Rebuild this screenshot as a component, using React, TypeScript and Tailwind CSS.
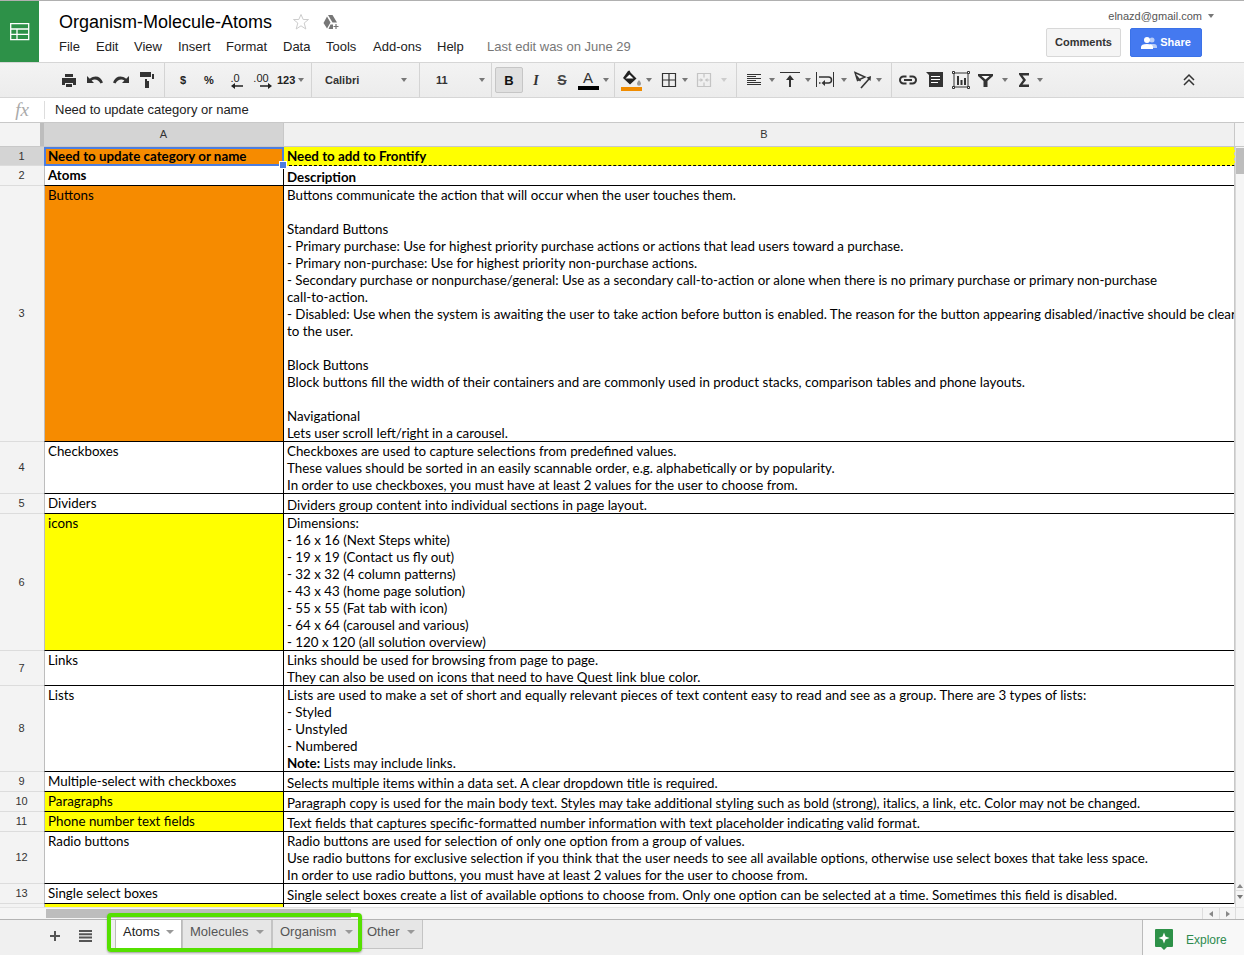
import React from 'react';

const arial = "font-['Liberation_Sans',Arial,sans-serif]";
const cellFont = "font-['Lato','Noto_Sans',sans-serif]";

const Caret = ({ light, big }: { light?: boolean; big?: boolean }) => (
  <span className={`inline-block h-0 w-0 border-t-[4px] border-x-transparent ${big ? 'border-x-[4px]' : 'border-x-[3px]'} ${light ? 'border-t-[#ccc]' : big ? 'border-t-[#999]' : 'border-t-[#777]'}`} />
);

const Ico = ({ children, w = 18 }: { children: React.ReactNode; w?: number }) => (
  <svg width={w} height="18" viewBox={`0 0 ${w} 18`} fill="none" className="block shrink-0">
    {children}
  </svg>
);

const Print = () => (
  <Ico>
    <path fill="#333" d="M5 3h8v3H5zM2 7h14v7h-3v-2H5v2H2zM6 13h6v3H6z" />
  </Ico>
);
const Undo = () => (
  <Ico>
    <path fill="#333" d="M1 5v7h7L5.600 9.600C8 7.800 12.500 8.200 14.500 12.500L17 11.500C14.800 4.800 8.500 3.800 3.800 7.800z" />
  </Ico>
);
const Redo = () => (
  <Ico>
    <path fill="#333" d="M17 5v7h-7l2.400-2.400C10 7.800 5.500 8.200 3.500 12.500L1 11.500C3.200 4.800 9.500 3.800 14.200 7.800z" />
  </Ico>
);
const Paint = () => (
  <Ico>
    <path fill="#333" d="M2 1h11v5H2zM14 3h2v5H9v2h2v7H7v-9h7z" />
  </Ico>
);
const Fill = () => (
  <Ico w={22}>
    <path fill="#222" d="M7 1l1.500-.5 1 2 6 6-6.500 6L2 8z" />
    <path fill="#fff" d="M8.500 4.500l4 4H4.500z" />
    <path fill="#999" d="M18 10c1.500 2 2 2.800 2 3.800a2 2 0 0 1-4 0c0-1 .5-1.800 2-3.800z" />
  </Ico>
);
const Borders = () => (
  <Ico>
    <path stroke="#333" strokeWidth="1.200" d="M2.500 2.500h13v13h-13zM9 2.500v13M2.500 9h13" />
  </Ico>
);
const Merge = () => (
  <Ico>
    <path stroke="#c4c4c4" strokeWidth="1.200" d="M2.500 2.500h13v13h-13zM9 2.500v4M9 11.500v4" />
    <path stroke="#c4c4c4" strokeWidth="1.200" d="M3.500 9h4M14.500 9h-4" />
    <path fill="#c4c4c4" d="M8 9L5.500 7v4zM10 9l2.500-2v4z" />
  </Ico>
);
const AlignLeft = () => (
  <Ico>
    <path stroke="#333" d="M2 3.500h14M2 5.500h9M2 7.500h14M2 9.500h9M2 11.500h14M2 13.500h14" />
  </Ico>
);
const VAlign = () => (
  <Ico w={22}>
    <path stroke="#333" d="M1 1.500h20" />
    <path fill="#333" d="M11 4l4 5h-3v7h-2V9H7z" />
  </Ico>
);
const Wrap = () => (
  <Ico w={20}>
    <path stroke="#333" d="M1.500 1v15M18.500 1v15" />
    <path stroke="#333" strokeWidth="1.500" d="M4 6h9.500a2.500 2.500 0 0 1 0 6H8" />
    <path fill="#333" d="M10 9v6l-3.500-3z" />
    <path stroke="#333" strokeWidth="1.500" d="M4 12h1.500" />
  </Ico>
);
const Rotate = () => (
  <Ico w={20}>
    <path stroke="#333" strokeWidth="1.400" d="M2 1.500l10 4.500-7.500 3.500zM3.500 5l4 5" />
    <path stroke="#333" strokeWidth="1.600" d="M8 17l8-9" />
    <path fill="#333" d="M18 5l-.5 5-4-3.500z" />
  </Ico>
);
const LinkIco = () => (
  <Ico>
    <path stroke="#333" strokeWidth="2" d="M7.500 5.500H4.500a3.500 3.500 0 0 0 0 7h3M10.500 5.500h3a3.500 3.500 0 0 1 0 7h-3M5 9h8" />
  </Ico>
);
const CommentIco = () => (
  <Ico>
    <path fill="#333" d="M0 1h17v15H3V4z" />
    <path stroke="#fff" d="M5 5.500h9M5 8.500h9M5 11.500h7" />
  </Ico>
);
const ChartIco = () => (
  <Ico>
    <path stroke="#333" d="M2 2h14v14H2z" />
    <path fill="#fff" stroke="#333" d="M.5.5h2v2h-2zM15.500.5h2v2h-2zM.5 15.500h2v2h-2zM15.500 15.500h2v2h-2z" />
    <path fill="#333" d="M5 5h2v9H5zM8.500 9h2v5h-2zM12 7h2v7h-2z" />
  </Ico>
);
const FilterIco = () => (
  <Ico w={16}>
    <path fill="#333" d="M0 3h15v2l-5.500 5v6h-4v-6L0 5z" />
    <path fill="#fff" d="M3.500 5h8L7.500 8.500z" />
  </Ico>
);
const Sigma = () => (
  <Ico w={14}>
    <path fill="#333" d="M2 2h10v2.500H5.500L9 9l-3.500 4.500H12V16H2v-1.500L6 9 2 3.500z" />
  </Ico>
);
const Collapse = () => (
  <Ico>
    <path stroke="#333" strokeWidth="1.500" d="M4 9l5-5 5 5M4 14l5-5 5 5" />
  </Ico>
);
const Arrowed = ({ label, right }: { label: string; right?: boolean }) => (
  <span className={`relative block h-[18px] w-[26px] text-center text-[11px] leading-[14px] text-[#222] ${arial}`}>
    {label}
    <svg width="12" height="6" viewBox="0 0 12 6" className={`absolute bottom-0 ${right ? 'left-[12px]' : 'left-[9px]'}`}>
      {right ? <path fill="#222" d="M0 2.200h8V0l4 3-4 3V3.800H0z" /> : <path fill="#222" d="M12 2.200H4V0L0 3l4 3V3.800h8z" />}
    </svg>
  </span>
);

const Slot = ({ w, children, className = '' }: { w: number; children?: React.ReactNode; className?: string }) => (
  <div style={{ width: w }} className={`flex h-full shrink-0 items-center justify-center ${className}`}>
    {children}
  </div>
);

const Group = ({ w, children, pl = 0, last }: { w?: number; children: React.ReactNode; pl?: number; last?: boolean }) => (
  <div style={{ width: w, paddingLeft: pl }} className={`flex h-full shrink-0 items-center ${last ? 'grow' : 'border-r border-[#d4d4d4]'}`}>
    {children}
  </div>
);

const Toolbar = () => (
  <div className={`flex h-[36px] border-y border-[#d6d6d6] bg-gradient-to-b from-[#f3f3f3] to-[#ececec] ${arial}`}>
    <Group w={165} pl={56}>
      <Slot w={26}><Print /></Slot>
      <Slot w={26}><Undo /></Slot>
      <Slot w={26}><Redo /></Slot>
      <Slot w={26}><Paint /></Slot>
    </Group>
    <Group w={147} pl={5}>
      <Slot w={26}><span className="text-[11px] font-bold text-[#222]">$</span></Slot>
      <Slot w={26}><span className="text-[11px] font-bold text-[#222]">%</span></Slot>
      <Slot w={26}><Arrowed label=".0" /></Slot>
      <Slot w={26}><Arrowed label=".00" right /></Slot>
      <span className="ml-[3px] text-[11px] font-bold text-[#222]">123</span>
      <span className="ml-[3px] flex"><Caret /></span>
    </Group>
    <Group w={108} pl={13}>
      <span className="w-[76px] text-[11px] font-bold text-[#333]">Calibri</span>
      <Caret />
    </Group>
    <Group w={72} pl={16}>
      <span className="w-[43px] text-[11px] font-bold text-[#333]">11</span>
      <Caret />
    </Group>
    <Group w={123} pl={3}>
      <div className="flex h-[26px] w-[28px] items-center justify-center rounded-[2px] border border-[#c6c6c6] bg-[#e0e0e0]">
        <span className="text-[13px] font-bold leading-none text-[#111]">B</span>
      </div>
      <Slot w={26}><span className="font-['Liberation_Serif',serif] text-[14px] font-bold italic text-[#333]">I</span></Slot>
      <Slot w={26}><span className="text-[14px] font-bold text-[#444] line-through">S</span></Slot>
      <Slot w={26}>
        <div className="flex flex-col items-center">
          <span className="text-[15px] leading-[13px] text-[#333]">A</span>
          <span className="mt-[2px] h-[4px] w-[21px] bg-black" />
        </div>
      </Slot>
      <span className="ml-[2px] flex"><Caret /></span>
    </Group>
    <Group w={122} pl={6}>
      <div className="flex w-[21px] flex-col items-center">
        <Fill />
        <span className="-mt-[1px] h-[4px] w-[21px] bg-[#f08c00]" />
      </div>
      <span className="ml-[4px] flex w-[14px]"><Caret /></span>
      <Borders />
      <span className="ml-[4px] flex w-[13px]"><Caret /></span>
      <Merge />
      <span className="ml-[8px] flex"><Caret light /></span>
    </Group>
    <Group w={155} pl={8}>
      <AlignLeft />
      <span className="ml-[6px] flex w-[6px]"><Caret /></span>
      <span className="ml-[4px] flex"><VAlign /></span>
      <span className="ml-[4px] flex w-[6px]"><Caret /></span>
      <span className="ml-[4px] flex"><Wrap /></span>
      <span className="ml-[6px] flex w-[6px]"><Caret /></span>
      <span className="ml-[6px] flex"><Rotate /></span>
      <span className="ml-[3px] flex"><Caret /></span>
    </Group>
    <Group last pl={7}>
      <LinkIco />
      <span className="ml-[9px]"><CommentIco /></span>
      <span className="ml-[8px]"><ChartIco /></span>
      <span className="ml-[8px]"><FilterIco /></span>
      <span className="ml-[8px] flex"><Caret /></span>
      <span className="ml-[9px]"><Sigma /></span>
      <span className="ml-[6px] flex"><Caret /></span>
      <span className="ml-[137px]"><Collapse /></span>
    </Group>
  </div>
);

const Header = () => (
  <div className={`flex h-[61px] ${arial}`}>
    <div className="flex w-[39px] shrink-0 items-center justify-center bg-[#2d9148]">
      <svg width="20" height="18" viewBox="0 0 20 18" fill="none">
        <path stroke="#fff" strokeWidth="1.300" d="M.7.700h18v16H.7zM.7 6h18M.7 11.300h18M7 6v10.700" />
      </svg>
    </div>
    <div className="min-w-0 grow pl-[20px]">
      <div className="flex h-[24px] items-center pt-[17px]">
        <span className="text-[18px] leading-[24px] text-black">Organism-Molecule-Atoms</span>
        <svg width="18" height="18" viewBox="0 0 18 18" fill="none" className="ml-[20px]">
          <path stroke="#ccc" d="M9 1.500l2.200 5H16.500l-4.300 3.500 1.600 6L9 12.800 4.200 16l1.600-6L1.500 6.500h5.300z" />
        </svg>
        <svg width="18" height="16" viewBox="0 0 18 16" className="ml-[12px]">
          <path fill="#777" d="M6 1h4.500l4.500 7.500h-4.500zM5 2.500l3.500 6L5 14.500 1.500 9zM6.500 15l2-4.500H11V15z" />
          <path stroke="#777" strokeWidth="1.200" d="M14 10v5M11.500 12.500h5" />
        </svg>
      </div>
      <div className="mt-[14px] flex items-center text-[13px] leading-[16px] text-[#222]">
        <span className="w-[37px]">File</span>
        <span className="w-[38px]">Edit</span>
        <span className="w-[44px]">View</span>
        <span className="w-[48px]">Insert</span>
        <span className="w-[57px]">Format</span>
        <span className="w-[43px]">Data</span>
        <span className="w-[47px]">Tools</span>
        <span className="w-[64px]">Add-ons</span>
        <span className="w-[49px]">Help</span>
        <span className="ml-[1px] text-[#777]">Last edit was on June 29</span>
      </div>
    </div>
    <div className="flex w-[198px] shrink-0 flex-col items-end pr-[42px]">
      <div className="-mr-[12px] mt-[7px] flex h-[16px] items-center text-[11px] text-[#555]">
        elnazd@gmail.com
        <span className="ml-[6px] flex"><Caret /></span>
      </div>
      <div className="mt-[4px] flex gap-[9px]">
        <div className="flex h-[29px] w-[75px] items-center justify-center rounded-[2px] border border-[#d8d8d8] bg-[#f5f5f5] text-[11px] font-bold text-[#333]">
          Comments
        </div>
        <div className="flex h-[29px] w-[72px] items-center justify-center gap-[3px] rounded-[2px] border border-[#3b72e8] bg-[#4479f0] text-[11px] font-bold text-white">
          <svg width="16" height="14" viewBox="0 0 16 14">
            <circle cx="11" cy="4" r="2.500" fill="#b9cdf8" />
            <path fill="#b9cdf8" d="M9 8h4c2 0 3 1 3 3v1H9z" />
            <circle cx="6" cy="4" r="3" fill="#fff" />
            <path fill="#fff" d="M0 13v-2c0-2 2-3 6-3s6 1 6 3v2z" />
          </svg>
          Share
        </div>
      </div>
    </div>
  </div>
);

const FormulaBar = () => (
  <div className={`flex h-[25px] items-center border-b border-[#c8c8c8] pb-[1px] ${arial}`}>
    <span className="w-[44px] text-center font-['Liberation_Serif',serif] text-[19px] italic leading-[22px] text-[#aaa]">fx</span>
    <span className="h-[18px] w-px bg-[#ddd]" />
    <span className="ml-[10px] text-[13px] text-[#222]">Need to update category or name</span>
  </div>
);

const ColHeaders = () => (
  <div className={`flex h-[24px] border-b border-[#c8c8c8] text-[11px] ${arial}`}>
    <div className="w-[40px] shrink-0 bg-[#f3f3f3]" />
    <div className="w-[4px] shrink-0 bg-[#bdbdbd]" />
    <div className="flex w-[240px] shrink-0 items-center justify-center border-r border-[#c8c8c8] bg-[#d4d4d4] text-[#333]">A</div>
    <div className="flex w-[951px] shrink-0 items-center justify-center border-r border-[#c8c8c8] bg-[#f0f0f0] pl-[10px] text-[#333]">B</div>
    <div className="grow bg-[#f5f5f5]" />
  </div>
);

type Line = string | React.ReactNode;
type RowData = {
  n: number;
  h: number;
  a: string;
  b: Line[];
  aBg?: string;
  bBg?: string;
  bold?: boolean;
  selected?: boolean;
};

const rows: RowData[] = [
  { n: 1, h: 19, a: 'Need to update category or name', aBg: 'bg-[#f68b00]', bBg: 'bg-[#ffff00]', bold: true, selected: true, b: ['Need to add to Frontify'] },
  { n: 2, h: 20, a: 'Atoms', bold: true, b: ['Description'] },
  {
    n: 3, h: 256, a: 'Buttons', aBg: 'bg-[#f68b00]',
    b: [
      'Buttons communicate the action that will occur when the user touches them.',
      '',
      'Standard Buttons',
      '- Primary purchase: Use for highest priority purchase actions or actions that lead users toward a purchase.',
      '- Primary non-purchase: Use for highest priority non-purchase actions.',
      '- Secondary purchase or nonpurchase/general: Use as a secondary call-to-action or alone when there is no primary purchase or primary non-purchase',
      'call-to-action.',
      '- Disabled: Use when the system is awaiting the user to take action before button is enabled. The reason for the button appearing disabled/inactive should be clear',
      'to the user.',
      '',
      'Block Buttons',
      'Block buttons fill the width of their containers and are commonly used in product stacks, comparison tables and phone layouts.',
      '',
      'Navigational',
      'Lets user scroll left/right in a carousel.',
    ],
  },
  {
    n: 4, h: 52, a: 'Checkboxes',
    b: [
      'Checkboxes are used to capture selections from predefined values.',
      'These values should be sorted in an easily scannable order, e.g. alphabetically or by popularity.',
      'In order to use checkboxes, you must have at least 2 values for the user to choose from.',
    ],
  },
  { n: 5, h: 20, a: 'Dividers', b: ['Dividers group content into individual sections in page layout.'] },
  {
    n: 6, h: 137, a: 'icons', aBg: 'bg-[#ffff00]',
    b: [
      'Dimensions:',
      '- 16 x 16 (Next Steps white)',
      '- 19 x 19 (Contact us fly out)',
      '- 32 x 32 (4 column patterns)',
      '- 43 x 43 (home page solution)',
      '- 55 x 55 (Fat tab with icon)',
      '- 64 x 64 (carousel and various)',
      '- 120 x 120 (all solution overview)',
    ],
  },
  {
    n: 7, h: 35, a: 'Links',
    b: ['Links should be used for browsing from page to page.', 'They can also be used on icons that need to have Quest link blue color.'],
  },
  {
    n: 8, h: 86, a: 'Lists',
    b: [
      'Lists are used to make a set of short and equally relevant pieces of text content easy to read and see as a group. There are 3 types of lists:',
      '- Styled',
      '- Unstyled',
      '- Numbered',
      <span key="note"><b>Note:</b> Lists may include links.</span>,
    ],
  },
  { n: 9, h: 20, a: 'Multiple-select with checkboxes', b: ['Selects multiple items within a data set. A clear dropdown title is required.'] },
  { n: 10, h: 20, a: 'Paragraphs', aBg: 'bg-[#ffff00]', b: ['Paragraph copy is used for the main body text. Styles may take additional styling such as bold (strong), italics, a link, etc. Color may not be changed.'] },
  { n: 11, h: 20, a: 'Phone number text fields', aBg: 'bg-[#ffff00]', b: ['Text fields that captures specific-formatted number information with text placeholder indicating valid format.'] },
  {
    n: 12, h: 52, a: 'Radio buttons',
    b: [
      'Radio buttons are used for selection of only one option from a group of values.',
      'Use radio buttons for exclusive selection if you think that the user needs to see all available options, otherwise use select boxes that take less space.',
      'In order to use radio buttons, you must have at least 2 values for the user to choose from.',
    ],
  },
  { n: 13, h: 20, a: 'Single select boxes', b: ['Single select boxes create a list of available options to choose from. Only one option can be selected at a time. Sometimes this field is disabled.'] },
];

const Row = ({ r }: { r: RowData }) => (
  <div style={{ height: r.h }} className="relative flex shrink-0">
    <div className={`flex w-[44px] shrink-0 items-center justify-center border-b border-[#dcdcdc] pr-[1px] text-[11px] text-[#333] ${arial} ${r.selected ? 'bg-[#d4d4d4]' : 'bg-[#f3f3f3]'}`}>
      {r.n}
    </div>
    <div
      className={`w-[240px] shrink-0 overflow-hidden whitespace-nowrap ${r.selected ? 'border-2 border-[#4d7ee0] pl-[2px] leading-[14px]' : 'border-b border-l border-r border-b-black border-l-[#bdbdbd] border-r-black pl-[3px] pt-[1px] leading-[17px]'} ${r.aBg ?? 'bg-white'} ${r.bold ? 'font-bold' : ''}`}
    >
      {r.a}
    </div>
    <div
      className={`flex w-[951px] shrink-0 flex-col justify-end overflow-hidden whitespace-nowrap pl-[3px] leading-[17px] ${r.selected ? 'border-b border-dashed border-b-black' : 'shadow-[inset_0_-1px_0_#000]'} border-r border-r-[#c8c8c8] ${r.bBg ?? 'bg-white'} ${r.bold ? 'font-bold' : ''}`}
    >
      {r.b.map((l, i) => (
        <div key={i} className="h-[17px] shrink-0">{l}</div>
      ))}
    </div>
    {r.selected && (
      <div className="absolute left-[280px] top-[15px] z-10 h-[6px] w-[6px] bg-[#4d7ee0] outline outline-1 outline-white" />
    )}
  </div>
);

const VScrollbar = () => (
  <div className="relative w-[9px] shrink-0 border-l border-[#d8d8d8] bg-[#f5f5f5]">
    <div className="absolute left-0 top-[1px] h-[26px] w-[8px] bg-[#bdbdbd]" />
    <div className="absolute bottom-[16px] left-0 flex h-[9px] w-[8px] items-center justify-center border-b border-[#ddd]">
      <span className="h-0 w-0 border-x-[3px] border-b-[4px] border-x-transparent border-b-[#888]" />
    </div>
    <div className="absolute bottom-[6px] left-0 flex h-[9px] w-[8px] items-center justify-center">
      <Caret />
    </div>
  </div>
);

const Grid = () => (
  <div className={`flex h-[760px] overflow-hidden text-[13.35px] text-black ${cellFont}`}>
    <div className="flex w-[1235px] shrink-0 flex-col overflow-hidden">
      {rows.map(r => (
        <Row key={r.n} r={r} />
      ))}
      <div className="flex h-[3px] shrink-0">
        <div className="w-[44px] bg-[#f3f3f3]" />
        <div className="w-[240px] border-l border-r border-[#bdbdbd] border-r-black bg-[#ffff00]" />
        <div className="grow bg-white" />
      </div>
    </div>
    <VScrollbar />
  </div>
);

const HScroll = () => (
  <div className="flex h-[12px] border-t border-[#e4e4e4] bg-[#f5f5f5]">
    <div className="ml-[46px] mt-[1px] h-[9px] w-[305px] bg-[#bdbdbd]" />
    <div className="ml-auto flex h-full">
      <div className="flex w-[17px] items-center justify-center border-l border-[#ddd]">
        <span className="h-0 w-0 border-y-[3px] border-r-[4px] border-y-transparent border-r-[#888]" />
      </div>
      <div className="flex w-[17px] items-center justify-center border-x border-[#ddd]">
        <span className="h-0 w-0 border-y-[3px] border-l-[4px] border-y-transparent border-l-[#888]" />
      </div>
      <div className="w-[8px]" />
    </div>
  </div>
);

const Tab = ({ label, active, w, pl = 7 }: { label: string; active?: boolean; w: number; pl?: number }) => (
  <div
    style={{ width: w, paddingLeft: pl }}
    className={`flex h-[29px] shrink-0 items-center justify-between border border-t-0 pr-[7px] text-[13px] ${
      active ? 'border-[#bbb] bg-white pb-[5px] text-[#222]' : 'border-[#c4c4c4] bg-[#e6e6e6] pb-[4px] text-[#555]'
    }`}
  >
    <span>{label}</span>
    <Caret big />
  </div>
);

const Tabs = () => (
  <div className={`relative flex h-[36px] border-t border-[#b4b4b4] bg-[#f0f0f0] ${arial}`}>
    <div className="flex w-[115px] shrink-0 items-center pb-[3px] pl-[49px]">
      <svg width="12" height="12" viewBox="0 0 12 12">
        <path fill="#555" d="M5 1h2v4h4v2H7v4H5V7H1V5h4z" />
      </svg>
      <svg width="13" height="12" viewBox="0 0 13 12" className="ml-[18px]">
        <path fill="#555" d="M0 0h13v2H0zM0 3.300h13v2H0zM0 6.600h13v2H0zM0 9.900h13v2H0z" />
      </svg>
    </div>
    <div className="flex items-start">
      <Tab label="Atoms" active w={67} />
      <Tab label="Molecules" w={90} />
      <Tab label="Organism" w={89} />
      <Tab label="Other" w={62} pl={5} />
    </div>
    <div className="absolute left-[107px] top-[-7px] h-[39px] w-[255px] rounded-[4px] border-[4px] border-[#55e000] shadow-[0_1px_2px_rgba(0,0,0,0.35)]" />
    <div className="ml-auto flex w-[102px] items-center border-l border-[#bbb] bg-[#f8f8f8] pl-[12px] pt-[3px]">
      <svg width="18" height="21" viewBox="0 0 18 21">
        <path fill="#2d9148" d="M1 0h16a1 1 0 0 1 1 1v16a1 1 0 0 1-1 1h-5l-3 3-3-3H1a1 1 0 0 1-1-1V1a1 1 0 0 1 1-1z" />
        <path fill="#fff" d="M9 3.500l1.500 4 4 1.500-4 1.500-1.500 4-1.500-4-4-1.500 4-1.500z" />
      </svg>
      <span className="ml-[13px] pt-[1px] text-[12px] text-[#2d8a4e]">Explore</span>
    </div>
  </div>
);

export default function App() {
  return (
    <div className="h-[955px] w-[1244px] overflow-hidden bg-white">
      <div className="h-[1px] bg-[#b0b0b0]" />
      <Header />
      <Toolbar />
      <FormulaBar />
      <ColHeaders />
      <Grid />
      <HScroll />
      <Tabs />
    </div>
  );
}
